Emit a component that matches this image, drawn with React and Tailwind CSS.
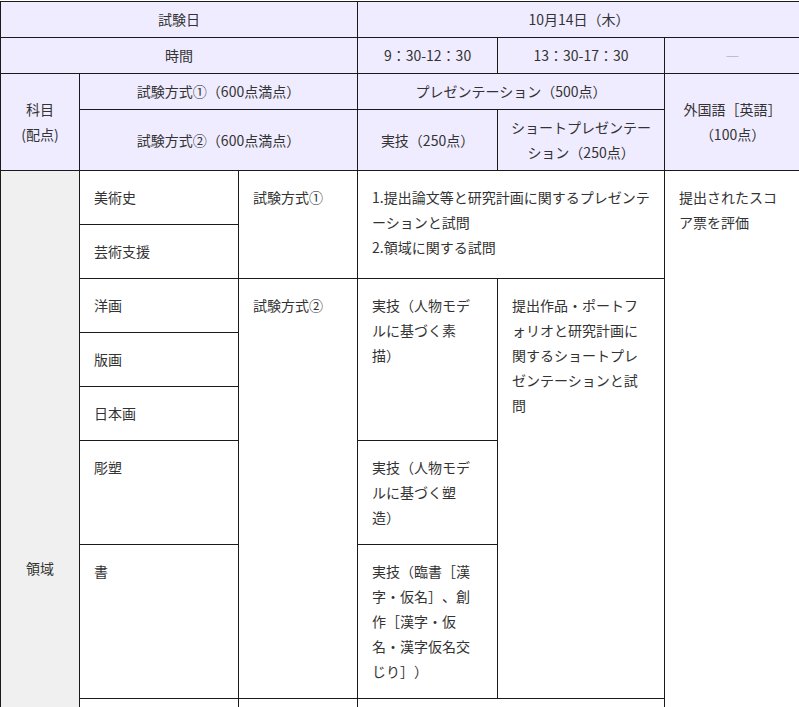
// 試験日程・配点表
const th = 'border border-[#1a1a1a] bg-[#f0ecff] px-2 py-[5px] text-center align-middle font-normal';
const td = 'border border-[#1a1a1a] bg-white px-[14px] py-[14px] text-left align-top';

export default function App() {
  return (
    <div
      className="h-screen w-full overflow-hidden bg-white text-[14px] leading-[25px] text-[#333] [text-spacing-trim:space-all]"
      style={{ fontFamily: '"Noto Sans CJK JP", "Noto Sans", sans-serif' }}
    >
      <table className="mt-px w-[800px] table-fixed border-collapse">
        <colgroup>
          <col className="w-[79px]" />
          <col className="w-[159px]" />
          <col className="w-[119px]" />
          <col className="w-[140px]" />
          <col className="w-[167px]" />
          <col className="w-[136px]" />
        </colgroup>
        <thead>
          <tr>
            <th colSpan={3} className={th}>試験日</th>
            <th colSpan={3} className={th}>10月14日（木）</th>
          </tr>
          <tr>
            <th colSpan={3} className={th}>時間</th>
            <th className={th}>9：30-12：30</th>
            <th className={th}>13：30-17：30</th>
            <th className={`${th} text-[#999]`}>―</th>
          </tr>
          <tr>
            <th rowSpan={2} className={th}>
              科目
              <br />
              (配点)
            </th>
            <th colSpan={2} className={th}>試験方式①（600点満点）</th>
            <th colSpan={2} className={th}>プレゼンテーション（500点）</th>
            <th rowSpan={2} className={th}>
              外国語［英語］
              <br />
              （100点）
            </th>
          </tr>
          <tr>
            <th colSpan={2} className={th}>試験方式②（600点満点）</th>
            <th className={th}>実技（250点）</th>
            <th className={th}>ショートプレゼンテーション（250点）</th>
          </tr>
        </thead>
        <tbody>
          <tr>
            <td rowSpan={8} className="border border-[#1a1a1a] bg-[#f0f0f0] text-center align-middle">
              領域
            </td>
            <td className={td}>美術史</td>
            <td rowSpan={2} className={td}>試験方式①</td>
            <td colSpan={2} rowSpan={2} className={td}>
              1.提出論文等と研究計画に関するプレゼンテーションと試問
              <br />
              2.領域に関する試問
            </td>
            <td rowSpan={8} className={td}>提出されたスコア票を評価</td>
          </tr>
          <tr>
            <td className={td}>芸術支援</td>
          </tr>
          <tr>
            <td className={td}>洋画</td>
            <td rowSpan={5} className={td}>試験方式②</td>
            <td rowSpan={3} className={td}>実技（人物モデルに基づく素描）</td>
            <td rowSpan={5} className={td}>
              提出作品・ポートフォリオと研究計画に関するショートプレゼンテーションと試問
            </td>
          </tr>
          <tr>
            <td className={td}>版画</td>
          </tr>
          <tr>
            <td className={td}>日本画</td>
          </tr>
          <tr>
            <td className={td}>彫塑</td>
            <td className={td}>実技（人物モデルに基づく塑造）</td>
          </tr>
          <tr>
            <td className={td}>書</td>
            <td className={td}>実技（臨書［漢字・仮名］、創作［漢字・仮名・漢字仮名交じり］）</td>
          </tr>
          <tr>
            {/* 画面外に続く行 */}
            <td className={`${td} h-[268px]`}></td>
            <td className={td}></td>
            <td colSpan={2} className={td}></td>
          </tr>
        </tbody>
      </table>
    </div>
  );
}
